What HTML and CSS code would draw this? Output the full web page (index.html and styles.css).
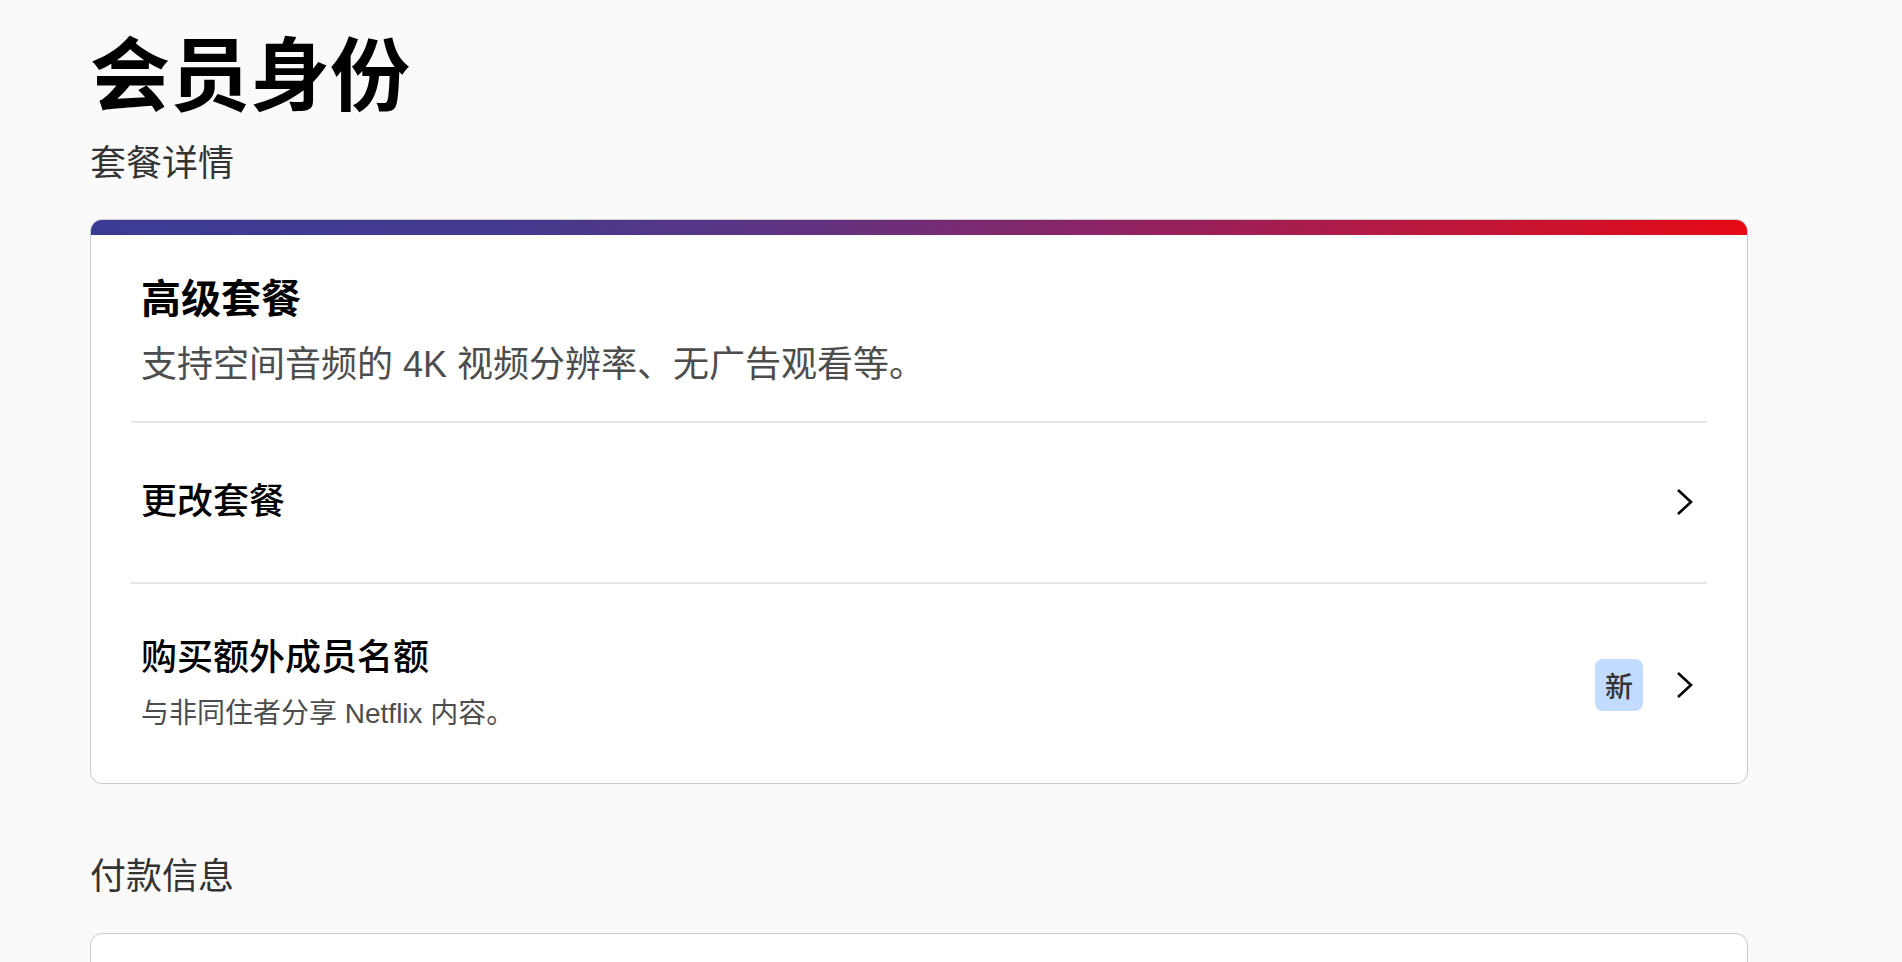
FILE: index.html
```html
<!DOCTYPE html>
<html lang="zh-CN">
<head>
<meta charset="utf-8">
<title>会员身份</title>
<link rel="stylesheet" href="styles.css">
</head>
<body>
<main class="page">
  <h1 class="page-title">会员身份</h1>
  <h2 class="section-title">套餐详情</h2>
  <section class="card plan-card">
    <div class="plan-strip"></div>
    <div class="plan-info">
      <div class="plan-name">高级套餐</div>
      <div class="plan-desc">支持空间音频的 4K 视频分辨率、无广告观看等。</div>
    </div>
    <div class="rows">
      <a class="row row-single" href="#">
        <div class="row-text">
          <div class="row-title">更改套餐</div>
        </div>
        <div class="row-end">
          <svg class="chevron" width="24" height="28" viewBox="0 0 24 28" aria-hidden="true"><polyline points="5,2 18,14 5,26" fill="none" stroke="#000" stroke-width="2.6" stroke-linecap="butt" stroke-linejoin="miter"/></svg>
        </div>
      </a>
      <a class="row row-double" href="#">
        <div class="row-text">
          <div class="row-title">购买额外成员名额</div>
          <div class="row-sub">与非同住者分享 Netflix 内容。</div>
        </div>
        <div class="row-end row-end-low">
          <span class="badge">新</span>
          <svg class="chevron" width="24" height="28" viewBox="0 0 24 28" aria-hidden="true"><polyline points="5,2 18,14 5,26" fill="none" stroke="#000" stroke-width="2.6" stroke-linecap="butt" stroke-linejoin="miter"/></svg>
        </div>
      </a>
    </div>
  </section>
  <h2 class="section-title section-title-lower">付款信息</h2>
  <section class="card payment-card"></section>
</main>
</body>
</html>
```
FILE: styles.css
```css
* { box-sizing: border-box; }
html, body { margin: 0; padding: 0; }
body {
  background: #fafafa;
  font-family: "Liberation Sans", "Noto Sans CJK SC", sans-serif;
  color: #000;
}
.page {
  padding: 29px 0 0 90px;
  width: 1748px;
}
.page-title {
  margin: 0;
  font-size: 80px;
  line-height: 96px;
  font-weight: 700;
  color: #000;
}
.section-title {
  margin: 12px 0 0;
  font-size: 36px;
  line-height: 54px;
  font-weight: 400;
  color: #333;
}
.section-title-lower {
  margin-top: 66px;
}
.card {
  background: #fff;
  border: 1px solid #c9c9c9;
  border-radius: 12px;
  overflow: hidden;
}
.plan-card {
  margin-top: 28px;
}
.plan-strip {
  height: 15px;
  background: linear-gradient(90deg, #3c3b94 0%, #443a8e 25%, #5e3382 42%, #8a2467 60%, #b8183f 80%, #e50914 100%);
}
.plan-info {
  padding: 34px 50px 28px;
}
.plan-name {
  font-size: 40px;
  line-height: 60px;
  font-weight: 700;
  color: #000;
}
.plan-desc {
  margin-top: 8px;
  font-size: 36px;
  line-height: 56px;
  color: #4d4d4d;
}
.rows {
  margin: 0 40px;
}
.row {
  display: flex;
  align-items: center;
  justify-content: space-between;
  border-top: 2px solid #e6e6e6;
  padding: 0 10px;
  text-decoration: none;
  color: inherit;
}
.row-single {
  padding-top: 52px;
  padding-bottom: 53px;
}
.row-double {
  padding-top: 47px;
  padding-bottom: 48px;
}
.row-title {
  font-size: 36px;
  line-height: 54px;
  font-weight: 500;
  color: #000;
}
.row-sub {
  margin-top: 8px;
  font-size: 28px;
  line-height: 42px;
  color: #4d4d4d;
}
.row-end {
  display: flex;
  align-items: center;
  gap: 30px;
}
.row-end-low {
  padding-top: 3px;
}
.chevron {
  display: block;
}
.badge {
  display: flex;
  align-items: center;
  justify-content: center;
  width: 48px;
  height: 52px;
  border-radius: 8px;
  background: #c2dbff;
  color: #333;
  font-size: 28px;
  font-weight: 500;
}
.payment-card {
  margin-top: 29px;
  height: 220px;
}
```
